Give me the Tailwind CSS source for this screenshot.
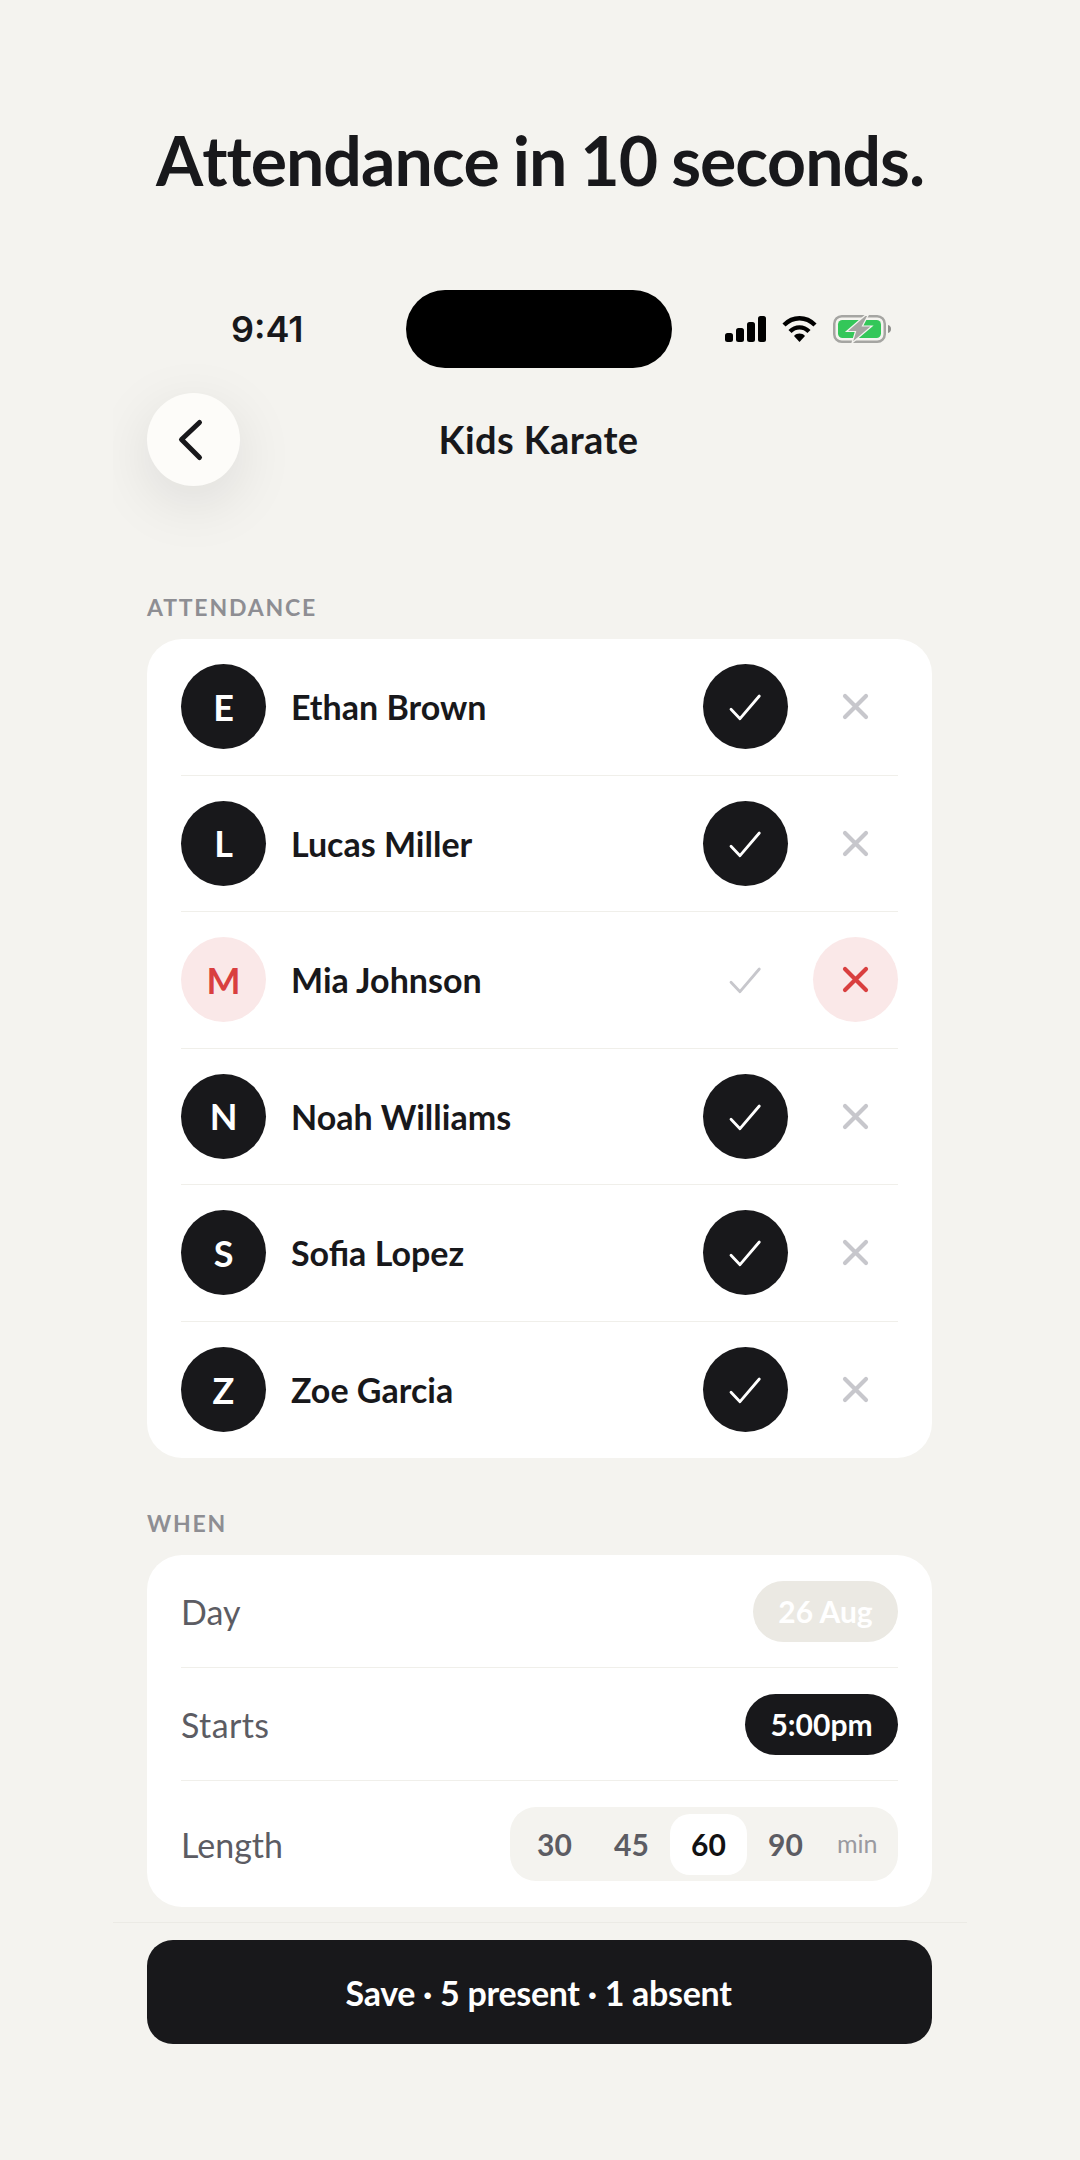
<!DOCTYPE html>
<html>
<head>
  <meta charset="UTF-8">
  <meta name="viewport" content="width=device-width, initial-scale=1.0">
  <script src="https://cdn.jsdelivr.net/npm/@tailwindcss/browser@4"></script>
</head>
<body class="bg-[#f4f3ef] font-['Lato',sans-serif] text-[#18181b]">
  <div class="w-[1080px] h-[2160px] overflow-hidden">
    <h1 class="pt-[120px] h-[290px] text-center text-[68px] leading-[80px] font-bold tracking-[-1.02px] [font-kerning:none] [word-spacing:-1.5px]">Attendance in 10 seconds.</h1>

    <div class="ml-[113px] w-[854px] h-[1870px] overflow-hidden">
      <!-- status bar -->
      <div class="relative h-[78px] flex items-center">
        <span class="ml-[118px] w-[175px] font-['Inter',sans-serif] text-[36px] font-semibold">9:41</span>
        <div class="w-[266px] h-[78px] rounded-full bg-black"></div>
        <div class="ml-[53px] flex items-center">
          <svg width="41" height="26" viewBox="0 0 41 26" fill="#000">
            <rect x="0" y="17" width="8" height="9" rx="2.5"/>
            <rect x="11" y="12" width="8" height="14" rx="2.5"/>
            <rect x="22" y="6" width="8" height="20" rx="2.5"/>
            <rect x="33" y="0" width="8" height="26" rx="2.5"/>
          </svg>
          <svg class="ml-[16px]" width="35" height="26" viewBox="0 0 35 26" fill="none">
            <path d="M2 9 C11 0 24 0 33 9" stroke="#000" stroke-width="4.4"/>
            <path d="M8 15.5 C13.5 10 21.5 10 27 15.5" stroke="#000" stroke-width="4.4"/>
            <path d="M12 20 C15 16.8 20 16.8 23 20 L17.5 26 Z" fill="#000"/>
          </svg>
          <svg class="ml-[16px]" width="58" height="28" viewBox="0 0 58 28" fill="none">
            <rect x="1.25" y="1.25" width="50.5" height="25.5" rx="7.5" stroke="#a5a5a2" stroke-width="2.5"/>
            <rect x="5" y="5" width="43" height="18" rx="4.5" fill="#34c759"/>
            <path d="M55 10 C57 10.5 58 12 58 14 C58 16 57 17.5 55 18 Z" fill="#8e8e8b"/>
            <path d="M32 0.5 L13.5 16.5 H22.5 L19 28 L39 11 H29.5 L35 0.5 Z" fill="#a5a5a2" stroke="#f4f3ef" stroke-width="1.2"/>
          </svg>
        </div>
      </div>

      <!-- nav -->
      <div class="relative mt-[25px] h-[93px] pr-[3px] flex items-center justify-center">
        <button class="absolute left-[34px] top-0 w-[93px] h-[93px] rounded-full bg-[#fdfcf9] shadow-[0_16px_60px_rgba(24,24,27,0.10)] flex items-center justify-center">
          <svg width="93" height="93" viewBox="0 0 93 93" fill="none">
            <path d="M52.5 29.5 L34.5 46.5 L52.5 64.5" stroke="#18181b" stroke-width="5" stroke-linecap="round" stroke-linejoin="round"/>
          </svg>
        </button>
        <span class="text-[38px] font-bold tracking-[0.4px]">Kids Karate</span>
      </div>

      <div class="pl-[34px] pr-[35px]">
        <div class="mt-[107px] h-[46px] text-[23px] leading-[28px] font-bold tracking-[1.8px] text-[#8e8e93]">ATTENDANCE</div>

        <!-- attendance card -->
        <div class="bg-white rounded-[35px] px-[34px]">
          <div class="h-[136.5px] flex items-center border-b border-[#f0efea]">
            <div class="w-[85px] h-[85px] rounded-full bg-[#18181b] text-white flex items-center justify-center text-[36px] font-bold">E</div>
            <span class="ml-[25px] flex-1 text-[34px] font-bold">Ethan Brown</span>
            <div class="w-[85px] h-[85px] rounded-full bg-[#18181b] flex items-center justify-center">
              <svg width="85" height="85" viewBox="0 0 85 85" fill="none"><path d="M28 45.3 L37 54.7 L56.3 32" stroke="#fff" stroke-width="2.8" stroke-linecap="round" stroke-linejoin="round"/></svg>
            </div>
            <div class="ml-[25px] w-[85px] h-[85px] rounded-full flex items-center justify-center">
              <svg width="85" height="85" viewBox="0 0 85 85" fill="none"><path d="M32 32 L53 53 M53 32 L32 53" stroke="#c7c7cc" stroke-width="4.2" stroke-linecap="round"/></svg>
            </div>
          </div>
          <div class="h-[136.5px] flex items-center border-b border-[#f0efea]">
            <div class="w-[85px] h-[85px] rounded-full bg-[#18181b] text-white flex items-center justify-center text-[36px] font-bold">L</div>
            <span class="ml-[25px] flex-1 text-[34px] font-bold">Lucas Miller</span>
            <div class="w-[85px] h-[85px] rounded-full bg-[#18181b] flex items-center justify-center">
              <svg width="85" height="85" viewBox="0 0 85 85" fill="none"><path d="M28 45.3 L37 54.7 L56.3 32" stroke="#fff" stroke-width="2.8" stroke-linecap="round" stroke-linejoin="round"/></svg>
            </div>
            <div class="ml-[25px] w-[85px] h-[85px] rounded-full flex items-center justify-center">
              <svg width="85" height="85" viewBox="0 0 85 85" fill="none"><path d="M32 32 L53 53 M53 32 L32 53" stroke="#c7c7cc" stroke-width="4.2" stroke-linecap="round"/></svg>
            </div>
          </div>
          <div class="h-[136.5px] flex items-center border-b border-[#f0efea]">
            <div class="w-[85px] h-[85px] rounded-full bg-[#fae8e8] text-[#d93f3f] flex items-center justify-center text-[36px] font-bold">M</div>
            <span class="ml-[25px] flex-1 text-[34px] font-bold">Mia Johnson</span>
            <div class="w-[85px] h-[85px] rounded-full flex items-center justify-center">
              <svg width="85" height="85" viewBox="0 0 85 85" fill="none"><path d="M28 45.3 L37 54.7 L56.3 32" stroke="#c7c7cc" stroke-width="2.8" stroke-linecap="round" stroke-linejoin="round"/></svg>
            </div>
            <div class="ml-[25px] w-[85px] h-[85px] rounded-full bg-[#fae8e8] flex items-center justify-center">
              <svg width="85" height="85" viewBox="0 0 85 85" fill="none"><path d="M32 32 L53 53 M53 32 L32 53" stroke="#d93f3f" stroke-width="4.2" stroke-linecap="round"/></svg>
            </div>
          </div>
          <div class="h-[136.5px] flex items-center border-b border-[#f0efea]">
            <div class="w-[85px] h-[85px] rounded-full bg-[#18181b] text-white flex items-center justify-center text-[36px] font-bold">N</div>
            <span class="ml-[25px] flex-1 text-[34px] font-bold">Noah Williams</span>
            <div class="w-[85px] h-[85px] rounded-full bg-[#18181b] flex items-center justify-center">
              <svg width="85" height="85" viewBox="0 0 85 85" fill="none"><path d="M28 45.3 L37 54.7 L56.3 32" stroke="#fff" stroke-width="2.8" stroke-linecap="round" stroke-linejoin="round"/></svg>
            </div>
            <div class="ml-[25px] w-[85px] h-[85px] rounded-full flex items-center justify-center">
              <svg width="85" height="85" viewBox="0 0 85 85" fill="none"><path d="M32 32 L53 53 M53 32 L32 53" stroke="#c7c7cc" stroke-width="4.2" stroke-linecap="round"/></svg>
            </div>
          </div>
          <div class="h-[136.5px] flex items-center border-b border-[#f0efea]">
            <div class="w-[85px] h-[85px] rounded-full bg-[#18181b] text-white flex items-center justify-center text-[36px] font-bold">S</div>
            <span class="ml-[25px] flex-1 text-[34px] font-bold">Sofia Lopez</span>
            <div class="w-[85px] h-[85px] rounded-full bg-[#18181b] flex items-center justify-center">
              <svg width="85" height="85" viewBox="0 0 85 85" fill="none"><path d="M28 45.3 L37 54.7 L56.3 32" stroke="#fff" stroke-width="2.8" stroke-linecap="round" stroke-linejoin="round"/></svg>
            </div>
            <div class="ml-[25px] w-[85px] h-[85px] rounded-full flex items-center justify-center">
              <svg width="85" height="85" viewBox="0 0 85 85" fill="none"><path d="M32 32 L53 53 M53 32 L32 53" stroke="#c7c7cc" stroke-width="4.2" stroke-linecap="round"/></svg>
            </div>
          </div>
          <div class="h-[136.5px] flex items-center">
            <div class="w-[85px] h-[85px] rounded-full bg-[#18181b] text-white flex items-center justify-center text-[36px] font-bold">Z</div>
            <span class="ml-[25px] flex-1 text-[34px] font-bold">Zoe Garcia</span>
            <div class="w-[85px] h-[85px] rounded-full bg-[#18181b] flex items-center justify-center">
              <svg width="85" height="85" viewBox="0 0 85 85" fill="none"><path d="M28 45.3 L37 54.7 L56.3 32" stroke="#fff" stroke-width="2.8" stroke-linecap="round" stroke-linejoin="round"/></svg>
            </div>
            <div class="ml-[25px] w-[85px] h-[85px] rounded-full flex items-center justify-center">
              <svg width="85" height="85" viewBox="0 0 85 85" fill="none"><path d="M32 32 L53 53 M53 32 L32 53" stroke="#c7c7cc" stroke-width="4.2" stroke-linecap="round"/></svg>
            </div>
          </div>
        </div>

        <div class="mt-[51px] h-[46px] text-[23px] leading-[28px] font-bold tracking-[1.8px] text-[#8e8e93]">WHEN</div>

        <!-- when card -->
        <div class="bg-white rounded-[35px] px-[34px]">
          <div class="h-[113px] flex items-center justify-between border-b border-[#f0efea] text-[34px] text-[#5c5c63]">
            <span>Day</span>
            <span class="w-[145px] h-[61px] rounded-full bg-[#ebe9e3] text-white text-[30px] font-bold flex items-center justify-center">26 Aug</span>
          </div>
          <div class="h-[113px] flex items-center justify-between border-b border-[#f0efea] text-[34px] text-[#5c5c63]">
            <span class="tracking-[0.4px]">Starts</span>
            <span class="w-[153px] h-[61px] rounded-full bg-[#18181b] text-white text-[30px] font-bold flex items-center justify-center">5:00pm</span>
          </div>
          <div class="h-[126px] flex items-center justify-between text-[34px] text-[#5c5c63]">
            <span>Length</span>
            <div class="w-[388px] h-[74px] rounded-[26px] bg-[#f4f3ef] p-[6px] flex items-center text-[30px] font-bold">
              <span class="w-[77px] h-[61px] flex items-center justify-center">30</span>
              <span class="w-[77px] h-[61px] flex items-center justify-center">45</span>
              <span class="w-[77px] h-[61px] rounded-[20px] bg-white text-[#111113] flex items-center justify-center">60</span>
              <span class="w-[77px] h-[61px] flex items-center justify-center">90</span>
              <span class="ml-[13px] text-[25px] font-normal text-[#9a9aa0]">min</span>
            </div>
          </div>
        </div>
      </div>

      <!-- save bar -->
      <div class="mt-[15px] pl-[34px] pr-[35px] pt-[17px] border-t border-[#ebeae5]">
        <button class="w-full h-[104px] pr-[2px] rounded-[26px] bg-[#18181b] text-white text-[34px] font-bold tracking-[-0.3px]">Save · 5 present · 1 absent</button>
      </div>
    </div>
  </div>
</body>
</html>
